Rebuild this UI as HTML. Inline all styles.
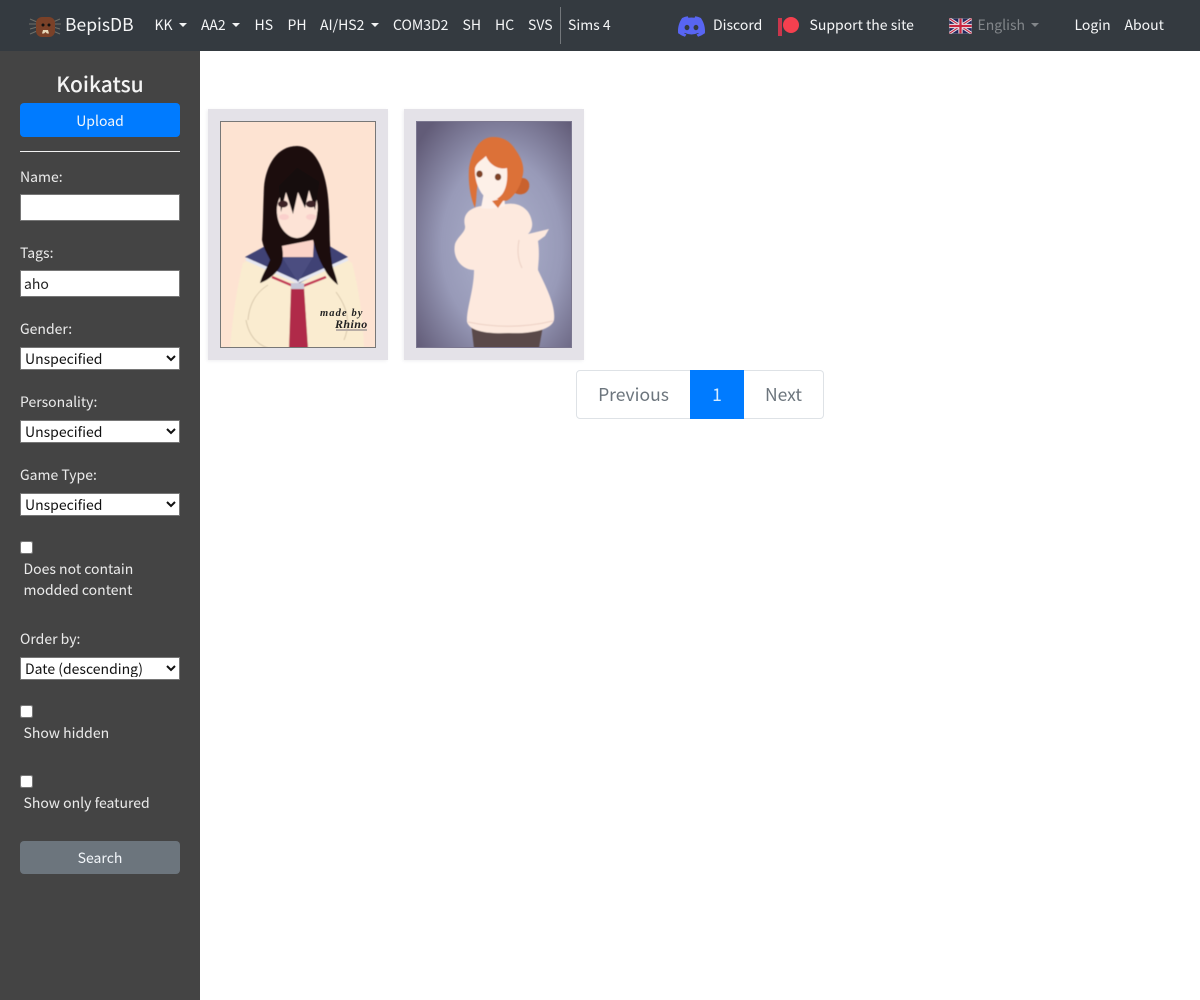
<!DOCTYPE html>
<html lang="en"><head><meta charset="utf-8"><title>BepisDB</title>
<style>
*{box-sizing:border-box}
html,body{margin:0;padding:0;width:1200px;height:1000px;overflow:hidden;background:#fff}
body{font-family:"Noto Sans CJK JP","Noto Sans CJK SC","Liberation Sans",sans-serif;font-size:14px;position:relative}
.a{position:absolute;white-space:nowrap;line-height:20px}
#nav{position:absolute;left:0;top:0;width:1200px;height:51px;background:#343a40}
#side{position:absolute;left:0;top:51px;width:200px;height:949px;background:#444}
.n{color:#f5f6f7;top:15px}
.l{color:#ebebeb}
.caret{position:absolute;width:0;height:0;border-left:4.3px solid transparent;border-right:4.3px solid transparent;border-top:4.3px solid #f2f3f4;top:23px}
.btn{position:absolute;left:20px;width:160px;border-radius:4px;color:#f2f6fa;text-align:center;font-size:14px}
input[type=text]{position:absolute;left:20px;width:160px;height:27px;border:1px solid #767676;background:#fff;padding:0 3px;font:14px "Noto Sans CJK JP",sans-serif;color:#222;margin:0;outline:0}
select{position:absolute;left:20px;width:160px;height:23px;border:1px solid #767676;background:#fff;font:14px "Noto Sans CJK JP",sans-serif;color:#111;margin:0;padding:0 0 2px 0;line-height:20px}
input[type=checkbox]{position:absolute;left:20px;width:13px;height:13px;margin:0}
.pg{position:absolute;top:370px;height:49px;line-height:47px;font-size:17.500px;text-align:center;color:#6c757d;background:#fff;border:1px solid #dee2e6}
.frame{position:absolute;top:109px;width:180px;height:251px;background:#e4e2e8;box-shadow:-1px 1px 3px rgba(120,120,130,.12)}
</style></head><body>
<div id="nav"></div>
<div id="side"></div>

<svg class="a" style="left:29px;top:15px;line-height:0" width="32" height="24" viewBox="0 0 32 24">
<g stroke="#6f6f68" stroke-width="1" fill="none"><path d="M1 4l7 3M0 9h8M1 14l7-2M1 19l7-3M31 4l-7 3M32 9h-8M31 14l-7-2M31 19l-7-3"/></g>
<rect x="7" y="2" width="19" height="20" rx="6" fill="#7a4128"/>
<circle cx="14" cy="10" r="1.500" fill="#111"/><circle cx="20" cy="10" r="1.500" fill="#111"/>
<path d="M14 15h5l1 3.500h-2l-1.500-1.500-1.500 1.500h-2z" fill="#e8d8b8"/>
</svg>
<div class="a n" style="left:65px;top:14px;font-size:17.500px;line-height:22px">BepisDB</div>
<div class="a n" style="left:154.500px">KK</div><i class="caret" style="left:179px"></i>
<div class="a n" style="left:201px">AA2</div><i class="caret" style="left:231.500px"></i>
<div class="a n" style="left:254.500px">HS</div>
<div class="a n" style="left:287.500px">PH</div>
<div class="a n" style="left:320px">AI/HS2</div><i class="caret" style="left:370.500px"></i>
<div class="a n" style="left:393px">COM3D2</div>
<div class="a n" style="left:462.500px">SH</div>
<div class="a n" style="left:495px">HC</div>
<div class="a n" style="left:528px">SVS</div>
<div class="a" style="left:560px;top:7px;width:1px;height:37px;background:#73777b"></div>
<div class="a n" style="left:568px">Sims 4</div>

<svg class="a" style="left:678px;top:16px" width="27" height="21" viewBox="0 0 127.140 96.360"><path fill="#5865f2" d="M107.700 8.070A105.150 105.150 0 0 0 81.470 0a72.060 72.060 0 0 0-3.360 6.830 97.680 97.680 0 0 0-29.110 0A72.370 72.370 0 0 0 45.640 0a105.890 105.890 0 0 0-26.250 8.090C2.790 32.650-1.710 56.600.54 80.210a105.730 105.730 0 0 0 32.170 16.150 77.700 77.700 0 0 0 6.890-11.110 68.420 68.420 0 0 1-10.850-5.180c.91-.66 1.800-1.340 2.660-2a75.570 75.570 0 0 0 64.320 0c.87.710 1.760 1.390 2.660 2a68.680 68.680 0 0 1-10.870 5.190 77 77 0 0 0 6.890 11.100 105.250 105.250 0 0 0 32.190-16.140c2.640-27.380-4.510-51.110-18.900-72.150ZM42.450 65.690C36.180 65.690 31 60 31 53s5-12.740 11.430-12.740S54 46 53.890 53s-5.050 12.690-11.440 12.690Zm42.240 0C78.410 65.690 73.250 60 73.250 53s5-12.740 11.440-12.740S96.230 46 96.120 53s-5.040 12.690-11.430 12.690Z"/></svg>
<div class="a n" style="left:713px">Discord</div>
<div class="a" style="left:778px;top:18px;width:3.500px;height:18px;background:#c9364c"></div>
<div class="a" style="left:783px;top:17px;width:16px;height:16px;border-radius:50%;background:#f5404f"></div>
<div class="a n" style="left:809.500px">Support the site</div>

<svg class="a" style="left:949px;top:18px" width="23" height="16" viewBox="0 0 60 40">
<rect width="60" height="40" fill="#23265c"/>
<path d="M0 0L60 40M60 0L0 40" stroke="#e8e8ee" stroke-width="8"/>
<path d="M0 0L60 40M60 0L0 40" stroke="#c8253f" stroke-width="3"/>
<path d="M30 0V40M0 20H60" stroke="#e8e8ee" stroke-width="11"/>
<path d="M30 0V40M0 20H60" stroke="#c8253f" stroke-width="6"/>
<rect x=".5" y=".5" width="59" height="39" fill="none" stroke="#8a8a90"/>
</svg>
<div class="a" style="left:977.500px;top:15px;color:#82868a">English</div>
<i class="caret" style="left:1031px;border-top-color:#82868a"></i>
<div class="a n" style="left:1074.500px">Login</div>
<div class="a n" style="left:1124.500px">About</div>

<div class="a" style="left:0;top:70px;width:200px;text-align:center;color:#f4f4f4;font-size:21px;font-weight:500;line-height:28px">Koikatsu</div>
<div class="btn" style="top:103px;height:34px;line-height:36px;background:#007bff">Upload</div>
<div class="a" style="left:20px;top:151px;width:160px;height:1px;background:#f2f2f2"></div>

<div class="a l" style="left:20px;top:167px">Name:</div>
<input type="text" style="top:194px">
<div class="a l" style="left:20px;top:243px">Tags:</div>
<input type="text" style="top:270px" value="aho">
<div class="a l" style="left:20px;top:319px">Gender:</div>
<select style="top:347px"><option>Unspecified</option></select>
<div class="a l" style="left:20px;top:392px">Personality:</div>
<select style="top:420px"><option>Unspecified</option></select>
<div class="a l" style="left:20px;top:465px">Game Type:</div>
<select style="top:493px"><option>Unspecified</option></select>
<input type="checkbox" style="top:541px">
<div class="a l" style="left:23.500px;top:558.500px">Does not contain</div>
<div class="a l" style="left:23.500px;top:579.500px">modded content</div>
<div class="a l" style="left:20px;top:629px">Order by:</div>
<select style="top:657px"><option>Date (descending)</option></select>
<input type="checkbox" style="top:705px">
<div class="a l" style="left:23.500px;top:722.500px">Show hidden</div>
<input type="checkbox" style="top:775px">
<div class="a l" style="left:23.500px;top:792.500px">Show only featured</div>
<div class="btn" style="top:841px;height:33px;line-height:34px;background:#6c757d">Search</div>

<div class="frame" style="left:208px"></div>
<div class="frame" style="left:404px"></div>

<svg class="a" style="left:220px;top:121px;overflow:hidden" width="156" height="227" viewBox="220 121 156 227">
<defs><filter id="b1"><feGaussianBlur stdDeviation=".6"/></filter></defs>
<rect x="220" y="121" width="156" height="227" fill="#fde3d2"/>
<g filter="url(#b1)">
<path d="M243 263Q262 252 282 246L312 246Q335 252 352 263Q362 300 364 348H230Q234 300 243 263Z" fill="#faecd0"/>
<path d="M248 320Q250 296 268 285M246 320Q250 342 268 348M336 292Q354 316 344 340" fill="none" stroke="#d8c8ac" stroke-width="1"/>
<path d="M245 257L282 237H314L348 257L298 284Z" fill="#3f4275"/>
<path d="M246 259L297 282L348 259" fill="none" stroke="#e6e7f2" stroke-width="3"/>
<path d="M272 277L298 288L326 277" fill="none" stroke="#c43a58" stroke-width="2.500"/>
<path d="M281 237L282 257H313L314 237Z" fill="#fbd3c8"/>
<path d="M282 257H313L298 282Z" fill="#4b4e80"/>
<path d="M291 287L304 287L308 348H289Z" fill="#b02a4a"/>
<path d="M291 283h13v6h-13z" fill="#c7c7d8"/>
<path d="M297 146C277 146 266 165 264 187C263 210 263 228 262 240C264 250 268 255 270 260C266 270 262 275 260 283C267 281 276 274 280 267C284 260 283 252 282 246L313 240C316 252 320 262 325 270C328 276 333 281 338 285C336 275 333 270 332 263C329 245 330 230 329 210C328 175 317 146 297 146Z" fill="#1a0c10"/>
<path d="M277 213C276 204 280 196 284 190H312C316 196 319 204 317 214C316 228 306 238 297 238C288 238 278 228 277 213Z" fill="#fde3d6"/>
<path d="M279 186L281 212L286 192L293 214L298 192L305 208L309 190L315 210L319 182L297 168Z" fill="#140a0d"/>
<ellipse cx="283" cy="204" rx="5" ry="3.500" fill="#3e2226"/><ellipse cx="311" cy="204" rx="5" ry="3.500" fill="#3e2226"/>
<ellipse cx="284" cy="217" rx="5" ry="3" fill="#fad0cc"/><ellipse cx="311" cy="217" rx="5" ry="3" fill="#fad0cc"/>
</g>
<text x="320" y="316" font-family="Liberation Serif,serif" font-style="italic" font-weight="700" font-size="10.500" letter-spacing="1.100" fill="#222">made by</text>
<text x="335" y="328" font-family="Liberation Serif,serif" font-style="italic" font-weight="700" font-size="12" letter-spacing=".4" fill="#222">Rhino</text>
<rect x="336" y="329" width="31" height="2" fill="#b8ada5"/>
<rect x="220.500" y="121.500" width="155" height="226" fill="none" stroke="#777"/>
</svg>

<svg class="a" style="left:416px;top:121px;overflow:hidden" width="156" height="227" viewBox="416 121 156 227">
<defs><radialGradient id="g" cx=".55" cy=".55" r=".7"><stop offset="0" stop-color="#adb2cd"/><stop offset=".55" stop-color="#989ab8"/><stop offset="1" stop-color="#625c78"/></radialGradient><filter id="b2"><feGaussianBlur stdDeviation=".6"/></filter></defs>
<rect x="416" y="121" width="156" height="227" fill="url(#g)"/>
<g filter="url(#b2)">
<path d="M471 323L474 348H539L543 326Z" fill="#5a4848"/>
<path d="M481 206L506 204C518 202 530 208 532 222C533 228 530 232 528 234L549 229L545 236L538 241C540 255 538 265 538 270C545 285 556 305 554 320C552 330 530 334 509 333C490 334 470 332 467 322C466 310 474 290 474 270C462 270 452 258 455 244C458 236 466 232 465 226C462 214 470 208 481 206Z" fill="#fde9de"/>
<path d="M519 240Q516 256 522 268M468 322Q510 331 553 321" fill="none" stroke="#ecd0c4" stroke-width="1"/>
<path d="M481 208L484 192H504L505 206Q492 210 481 208Z" fill="#fdf0ea"/>
<path d="M514 188C512 178 526 174 529 183C531 192 522 197 515 193Z" fill="#c9622e"/>
<path d="M493 137C480 137 472 150 469 168C468 182 470 197 475 208C477 198 476 190 478 184C486 192 500 204 508 200C514 196 520 188 522 178C526 166 520 156 515 149C510 141 503 137 493 137Z" fill="#dc7138"/>
<path d="M475 168C474 182 481 198 491 200C501 200 509 190 507 168C500 170 490 166 486 156C482 160 477 162 475 168Z" fill="#fdf0e8"/>
<path d="M492 201L498 208L505 198Z" fill="#dc7138"/>
<ellipse cx="479.500" cy="174" rx="3.200" ry="3.500" fill="#7e4225"/><ellipse cx="498" cy="177" rx="3.200" ry="3.500" fill="#7e4225"/>
</g>
<rect x="416.500" y="121.500" width="155" height="226" fill="none" stroke="#7b7790"/>
</svg>

<div class="pg" style="left:576px;width:115px;border-radius:4px 0 0 4px">Previous</div>
<div class="pg" style="left:690px;width:54px;background:#007bff;border-color:#007bff;color:#d6ecff">1</div>
<div class="pg" style="left:744px;width:80px;border-radius:0 4px 4px 0;border-left:0">Next</div>
</body></html>
